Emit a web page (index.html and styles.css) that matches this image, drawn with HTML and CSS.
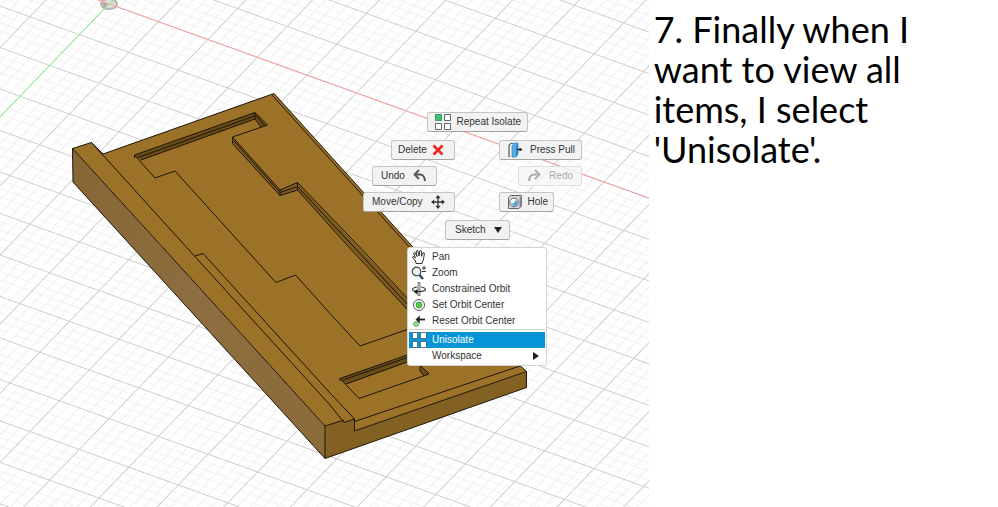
FILE: index.html
```html
<!DOCTYPE html>
<html lang="en">
<head>
<meta charset="utf-8">
<title>Step 7: Unisolate</title>
<link rel="stylesheet" href="styles.css">
</head>
<body>
<main class="slide">
  <section class="viewport" aria-label="Model view">
    <svg class="scene" viewBox="0 0 649 507" preserveAspectRatio="xMinYMin slice" aria-hidden="true">
      <defs>
        <!-- One major grid cell, split in five each way, skewed into the view plane; major lines cross at its centre -->
        <pattern id="grid" width="1" height="1" patternUnits="userSpaceOnUse" patternTransform="matrix(49.5 17.8 -29.7 30.8 99.1 -20.5)">
          <path class="minor" d="M.1 0V1M.3 0V1M.7 0V1M.9 0V1M0 .1H1M0 .3H1M0 .7H1M0 .9H1"/>
          <path class="major-v" d="M.5 0V1"/>
          <path class="major-h" d="M0 .5H1"/>
        </pattern>
        <linearGradient id="side" x1="0" y1="0" x2="1" y2="1">
          <stop offset="0" stop-color="#876634"/><stop offset=".5" stop-color="#8c6e40"/><stop offset="1" stop-color="#8b6b38"/>
        </linearGradient>
      </defs>
      <rect width="649" height="507" fill="#fff"/>
      <rect width="649" height="507" fill="url(#grid)"/>
      <ellipse cx="109" cy="4" rx="8" ry="5" fill="#ddd" stroke="#b5b5b5" stroke-width="2"/>
      <path d="M109 4L104 8 102 2Z" fill="#aaa"/>
      <path class="axis-x" d="M98 0L649 198.3"/>
      <path class="axis-y" d="M113 0L0 117"/>

      <path class="top" d="M72.5 148.5L91.5 142.5 103 154 274 93.5 520 365.5 526.5 371.5 354.5 431 325 426Z"/>
      <path fill="url(#side)" d="M72.5 148.5L325 426V458.500L73 182Z"/>
      <path fill="#836123" d="M325 426L344 420V422.500L354.500 419V431L526.500 371.500V387.500L325 458.500Z"/>
      <path class="wall" d="M134.500 155L255 112.500 267 125 261 127 255 119 141 160Z"/>
      <path class="wall soft" d="M232.500 137L280 190 297.500 183 408 300V310L297.500 190 280 196 232.500 143.500Z"/>
      <path class="wall" d="M340 378.500L410 354V361L346 384Z"/>
      <path class="wall" d="M420 365L429 374 424 376 420 371Z"/>

      <g class="edge">
        <path d="M72.500 148.500L91.500 142.500 103 154 274 93.500 520 365.500 526.500 371.500V387.500L325 458.500 73 182Z"/>
        <path d="M72.500 148.500L165 250 325 426V458.500M325 426L344 420"/>
        <path d="M91.500 142.500L189 250 330 405 344 422.500 354.500 419"/>
        <path d="M195 256L203 253.500 330 393 354.500 419V431L526.500 371.500M354.500 421.500L520 366"/>
        <path d="M272 95L412 250"/>
        <path d="M134.500 155L255 112.500 267.500 125 232.500 137V143.500L280 195.500 297.500 190 351.500 250 408 310"/>
        <path d="M134.500 155L155 178 175 171 246.500 250 276 282.500 295.500 275 330 313.500 360 346 410 328.500"/>
        <path d="M138 157.500L256 115.500 265 126M141 160L255 119 261 127M255 112.500V119M134.500 155V158"/>
        <path d="M232.500 137L280 190 297.500 182.500 362.500 250 408 299M234 141L280 192.500 297.500 186.500 408 305M280 190V196M297.500 183V190"/>
        <path d="M340 378.500L410 354M340 378.500L359 398.500 429 374 420 365M343 380L410 356.500M346 384L410 361M340 378.500V381M420 365V371L424 376"/>
      </g>
    </svg>

    <nav class="ring" aria-label="Marking menu">
      <button type="button" class="mark repeat">
        <svg width="16" height="16" viewBox="0 0 16 16"><g fill="#fff" stroke="#666"><path fill="#44be72" stroke="#3a9860" d="M.5 .5h6v6h-6z"/><path d="M9.500 .5h6v6h-6zM.5 9.500h6v6h-6zM9.500 9.500h6v6h-6z"/></g></svg>
        Repeat Isolate</button>
      <button type="button" class="mark delete">Delete
        <svg width="16" height="16" viewBox="0 0 16 16"><path d="M3.500 3.500l9 9M12.500 3.500l-9 9" stroke="#f32626" stroke-width="2.600" fill="none"/></svg></button>
      <button type="button" class="mark press">
        <svg width="16" height="16" viewBox="0 0 16 16"><path d="M6 1.500H4Q2 2 2 4.500V14.500H3" fill="none" stroke="#555" stroke-width="1.200"/><path d="M5 4l2-3h4v11l-2 3H5z" fill="#58aee4" stroke="#2f80b8" stroke-width=".7"/><path d="M9 4l2-3v11l-2 3z" fill="#2a83c4"/><path d="M10 7.500h4" stroke="#222" stroke-width="1.200"/><path d="M12.500 5.500l3 2-3 2z" fill="#222"/></svg>
        Press Pull</button>
      <button type="button" class="mark undo">Undo
        <svg width="16" height="16" viewBox="0 0 16 16"><path d="M4 6.500h4.500q4 .5 4.500 6.500" fill="none" stroke="#555" stroke-width="2"/><path d="M7 2L2.500 6.500 7 11" fill="none" stroke="#555" stroke-width="1.800"/></svg></button>
      <button type="button" class="mark redo" disabled>
        <svg width="16" height="16" viewBox="0 0 16 16"><path d="M12 6.500H7.500q-4 .5-4.500 6.500" fill="none" stroke="#aaa" stroke-width="2"/><path d="M9 2l4.500 4.500L9 11" fill="none" stroke="#aaa" stroke-width="1.800"/></svg>
        Redo</button>
      <button type="button" class="mark move">Move/Copy
        <svg width="16" height="16" viewBox="0 0 16 16"><path d="M8 2v12M2 8h12" stroke="#333" stroke-width="1.300"/><path fill="#333" d="M8 1l2.600 3.200H5.400zM8 15l2.600-3.200H5.400zM1 8l3.200-2.600v5.200zM15 8l-3.200-2.600v5.200z"/></svg></button>
      <button type="button" class="mark hole">
        <svg width="16" height="16" viewBox="0 0 16 16"><path d="M1.500 3.500l2-2h11v10.500l-2.500 2.500H1.500z" fill="#d3d7da" stroke="#666"/><path d="M12.500 14V4l2-2V12z" fill="#85898c"/><circle cx="7" cy="8.500" r="4.300" fill="#fff" stroke="#666"/><path d="M7 12q-3-.5-3-4l2 2 3-4q2 1 1.500 3.500T7 12z" fill="#4aa3dc"/></svg>
        Hole</button>
      <button type="button" class="mark sketch">Sketch
        <svg width="10" height="16" viewBox="0 0 10 16"><path fill="#222" d="M1 5h8l-4 6z"/></svg></button>
    </nav>

    <ul class="menu" aria-label="Context menu">
      <li><button type="button">
        <svg width="16" height="16" viewBox="0 0 16 16"><path fill="#fff" stroke="#333" stroke-linejoin="round" d="M5 14.500L4.500 12 1.500 8.500Q1.500 7.300 3 7.700L4.500 9 2.700 4.300Q3 3 4.200 3.800L6 7.500 5.200 2.200Q6 .8 7 2L8 7 8.800 1.800Q10 .9 10.500 2.200L10.300 7.300 12 3.800Q13.500 3.300 13.400 4.700L12.500 10 11 14.500z"/></svg>Pan</button></li>
      <li><button type="button">
        <svg width="16" height="16" viewBox="0 0 16 16"><circle cx="5.500" cy="6.500" r="4.300" fill="#e5f2f6" stroke="#444" stroke-width="1.200"/><path d="M8.500 10l3.500 4" stroke="#265064" stroke-width="2.600"/><path d="M11 3h4M13 1v4M11 6.500h4" stroke="#333"/></svg>Zoom</button></li>
      <li><button type="button">
        <svg width="16" height="16" viewBox="0 0 16 16"><path d="M7 1.500h2v13H7z" fill="#ddd" stroke="#555" stroke-width=".8"/><path d="M6 6Q1 7 1.500 9q1 1.500 6.500 1.500 6 0 6.500-2Q14 6.500 10 6" fill="none" stroke="#333" stroke-width="1.100"/><path d="M6.500 8v5.500l-4-2.800z" fill="#222"/></svg>Constrained Orbit</button></li>
      <li><button type="button">
        <svg width="16" height="16" viewBox="0 0 16 16"><circle cx="8" cy="8" r="5.500" fill="#fff" stroke="#555"/><circle cx="8" cy="8" r="3" fill="#57cf4b" stroke="#38873a" stroke-width=".8"/></svg>Set Orbit Center</button></li>
      <li><button type="button">
        <svg width="16" height="16" viewBox="0 0 16 16"><circle cx="5" cy="11" r="2.500" fill="#8ce08e" stroke="#65a968" stroke-width=".8"/><path d="M7 6.500h7" stroke="#222" stroke-width="1.800"/><path d="M8.800 2.500v8L4.500 6.500z" fill="#222"/></svg>Reset Orbit Center</button></li>
      <li class="split"><button type="button" class="chosen">
        <svg width="16" height="16" viewBox="0 0 16 16"><path fill="#fff" stroke="#4c6f83" d="M1.500 .5h5v6h-5zM9.500 .5h6v6h-6zM1.500 9.500h5v6h-5zM9.500 9.500h6v6h-6z"/></svg>Unisolate</button></li>
      <li><button type="button" class="more">Workspace
        <svg width="6" height="10" viewBox="0 0 6 10"><path fill="#222" d="M0 1l6 4-6 4z"/></svg></button></li>
    </ul>
  </section>
  <h1 class="step">7. Finally when I want to view all items, I select 'Unisolate'.</h1>
</main>
</body>
</html>
```
FILE: styles.css
```css
* { box-sizing: border-box; }
body { margin: 0; background: #fff; }
.slide { display: flex; min-height: 100vh; }
.viewport {
  position: relative;
  flex: 0 0 65%;
  overflow: hidden;
  font: 10px/16px "Liberation Sans", Arial, sans-serif;
}
.scene { position: absolute; inset: 0; width: 100%; height: 100%; }
.minor { fill: none; stroke: #efefef; stroke-width: 0.02; }
.major-v, .major-h { fill: none; stroke: #cccccc; }
.major-v { stroke-width: 0.02; }
.major-h { stroke-width: 0.026; }
.axis-x { stroke: #ff9c9c; stroke-width: 1; }
.axis-y { stroke: #7dfa7d; stroke-width: 1; }
.top { fill: #9c7229; }
.wall { fill: #6a4c19; }
.soft { fill: #7c5a20; }
.edge { fill: none; stroke: #1c1508; stroke-width: 1; stroke-linejoin: round; }

.step {
  flex: 1;
  margin: 0;
  padding: 9px 64px 0 5px;
  color: #000;
  font: 400 36px/40px "Century Gothic", "URW Gothic", Lato, sans-serif;
}

button {
  border: 0;
  padding: 0;
  background: none;
  color: #333;
  font: inherit;
  text-align: left;
}
button svg { flex: none; display: block; }

/* Marking menu: buttons laid freely around the cursor */
.mark {
  position: absolute;
  display: flex;
  align-items: center;
  justify-content: space-between;
  height: 20px;
  padding: 0 8px;
  border: 1px solid #c4c4c4;
  border-bottom-color: #a4a4a4;
  border-radius: 3px;
  background: #f2f2f2;
  white-space: nowrap;
}
.repeat { left: 427px; top: 112px; width: 101px; padding: 0 6px 0 7px; }
.delete { left: 391px; top: 140px; width: 64px; padding: 0 8px 0 6px; }
.press { left: 499px; top: 140px; width: 83px; padding: 0 6px 0 7px; }
.undo { left: 372px; top: 166px; width: 65px; }
.redo { left: 518px; top: 166px; width: 64px; padding: 0 8px 0 7px; }
.move { left: 363px; top: 192px; width: 92px; }
.hole { left: 499px; top: 192px; width: 55px; padding: 0 5px 0 7px; }
.sketch { left: 445px; top: 220px; width: 65px; padding: 0 6px 0 9px; }
.redo:disabled {
  border-color: #dedede;
  background: rgba(245, 245, 245, 0.75);
  color: #aaa;
}

.menu {
  position: absolute;
  left: 407px;
  top: 247px;
  width: 140px;
  margin: 0;
  padding: 1px;
  border: 1px solid #d4d4d4;
  border-radius: 3px;
  background: #fff;
  list-style: none;
}
.menu button {
  display: flex;
  align-items: center;
  gap: 5px;
  width: 100%;
  height: 16px;
  padding: 0 6px 0 2px;
}
.split { padding-top: 2px; border-top: 1px solid #d0d0d0; }
.menu .chosen { background: #0696d7; color: #fff; }
.menu .more { justify-content: space-between; padding-left: 23px; }
```
